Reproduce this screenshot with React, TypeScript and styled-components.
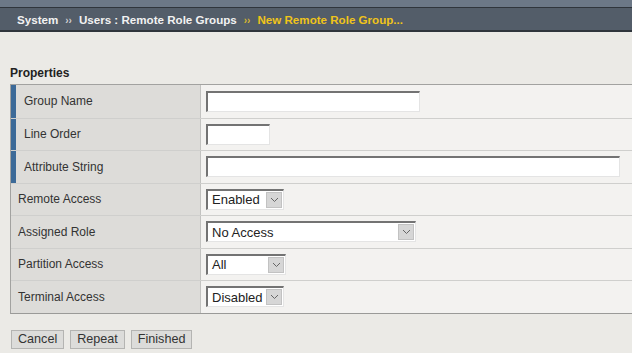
import styled, { createGlobalStyle } from "styled-components";

const GlobalStyle = createGlobalStyle`
  body {
    margin: 0;
    background: #ebeae6;
    font-family: "Liberation Sans", Arial, sans-serif;
    color: #333;
  }
`;

const fields = [
  { label: "Group Name", required: true, kind: "input", width: 214 },
  { label: "Line Order", required: true, kind: "input", width: 64 },
  { label: "Attribute String", required: true, kind: "input", width: 414 },
  { label: "Remote Access", kind: "select", value: "Enabled", width: 78 },
  { label: "Assigned Role", kind: "select", value: "No Access", width: 210 },
  { label: "Partition Access", kind: "select", value: "All", width: 80 },
  { label: "Terminal Access", kind: "select", value: "Disabled", width: 78 },
];

const App = () => {
  return (
    <>
      <GlobalStyle />
      <TopStripe />
      <Crumbs>
        <span>System</span>
        <Sep>››</Sep>
        <span>Users : Remote Role Groups</span>
        <Sep $current>››</Sep>
        <Current>New Remote Role Group...</Current>
      </Crumbs>

      <Content>
        <SectionTitle>Properties</SectionTitle>
        <Table>
          {fields.map((f) => (
            <Row key={f.label}>
              <LabelCell $required={f.required}>{f.label}</LabelCell>
              <ValueCell>
                {f.kind === "input" ? (
                  <TextField style={{ width: f.width }} />
                ) : (
                  <SelectBox style={{ width: f.width }}>
                    <span>{f.value}</span>
                    <DropBtn>
                      <svg width="9" height="6" viewBox="0 0 9 6">
                        <path d="M1 1 L4.5 4.5 L8 1" fill="none" stroke="#666" strokeWidth="1" />
                      </svg>
                    </DropBtn>
                  </SelectBox>
                )}
              </ValueCell>
            </Row>
          ))}
        </Table>

        <Buttons>
          <Btn>Cancel</Btn>
          <Btn>Repeat</Btn>
          <Btn>Finished</Btn>
        </Buttons>
      </Content>
    </>
  );
};

export default App;

const TopStripe = styled.div`
  height: 7px;
  background: #6c7887;
`;

const Crumbs = styled.div`
  height: 22px;
  border-top: 1px solid #2f353c;
  border-bottom: 2px solid #2f353c;
  background: #535d69;
  display: flex;
  align-items: center;
  padding-left: 17px;
  font-size: 11.6px;
  font-weight: bold;
  color: #f2f2f2;
  white-space: nowrap;
`;

const Sep = styled.span<{ $current?: boolean }>`
  font-size: 10px;
  margin: 2px 7px 0 7px;
  color: ${(p) => (p.$current ? "#d8b730" : "#d0d0d0")};
`;

const Current = styled.span`
  color: #f0c419;
`;

const Content = styled.div`
  padding: 34px 0 0 10px;
`;

const SectionTitle = styled.div`
  font-size: 12px;
  font-weight: bold;
  color: #222;
  height: 18px;
`;

const Table = styled.div`
  border-top: 1px solid #a2a2a0;
  border-bottom: 1px solid #9a9a98;
  border-left: 1px solid #a2a2a0;
`;

const Row = styled.div`
  display: grid;
  grid-template-columns: 190px 1fr;
  box-sizing: border-box;
  height: 32.5px;
  & + & {
    border-top: 1px solid #cfcfcd;
  }
`;

const LabelCell = styled.div<{ $required?: boolean }>`
  display: flex;
  align-items: center;
  background: #dddcd9;
  border-right: 1px solid #c2c2c0;
  font-size: 12px;
  color: #333;
  padding-left: ${(p) => (p.$required ? "8px" : "7px")};
  border-left: ${(p) => (p.$required ? "5px solid #3c6a98" : "0")};
`;

const ValueCell = styled.div`
  display: flex;
  align-items: center;
  background: #f3f2f0;
  padding-left: 5px;
`;

const TextField = styled.input`
  box-sizing: border-box;
  height: 21px;
  background: #fff;
  border-style: solid;
  border-width: 2px 1px 1px 2px;
  border-color: #737373 #e4e4e4 #e4e4e4 #737373;
  padding: 0 4px;
  font-family: "Liberation Sans", Arial, sans-serif;
  font-size: 13px;
  outline: none;
`;

const SelectBox = styled.div`
  box-sizing: border-box;
  height: 21px;
  display: flex;
  align-items: center;
  justify-content: space-between;
  background: #fff;
  border-style: solid;
  border-width: 2px 1px 1px 2px;
  border-color: #737373 #e4e4e4 #e4e4e4 #737373;
  padding: 0 1px 0 4px;
  font-size: 13px;
  color: #222;
`;

const DropBtn = styled.div`
  width: 16px;
  height: 16px;
  box-sizing: border-box;
  background: #d6d6d6;
  border: 1px solid #c2c2c2;
  display: flex;
  align-items: center;
  justify-content: center;
`;

const Buttons = styled.div`
  display: flex;
  gap: 6px;
  margin-top: 16px;
  padding-left: 1px;
`;

const Btn = styled.button`
  height: 19px;
  padding: 0 6px;
  background: #dcdcda;
  border: 1px solid #b4b4b2;
  font-family: "Liberation Sans", Arial, sans-serif;
  font-size: 12.6px;
  color: #333;
  line-height: 17px;
`;
